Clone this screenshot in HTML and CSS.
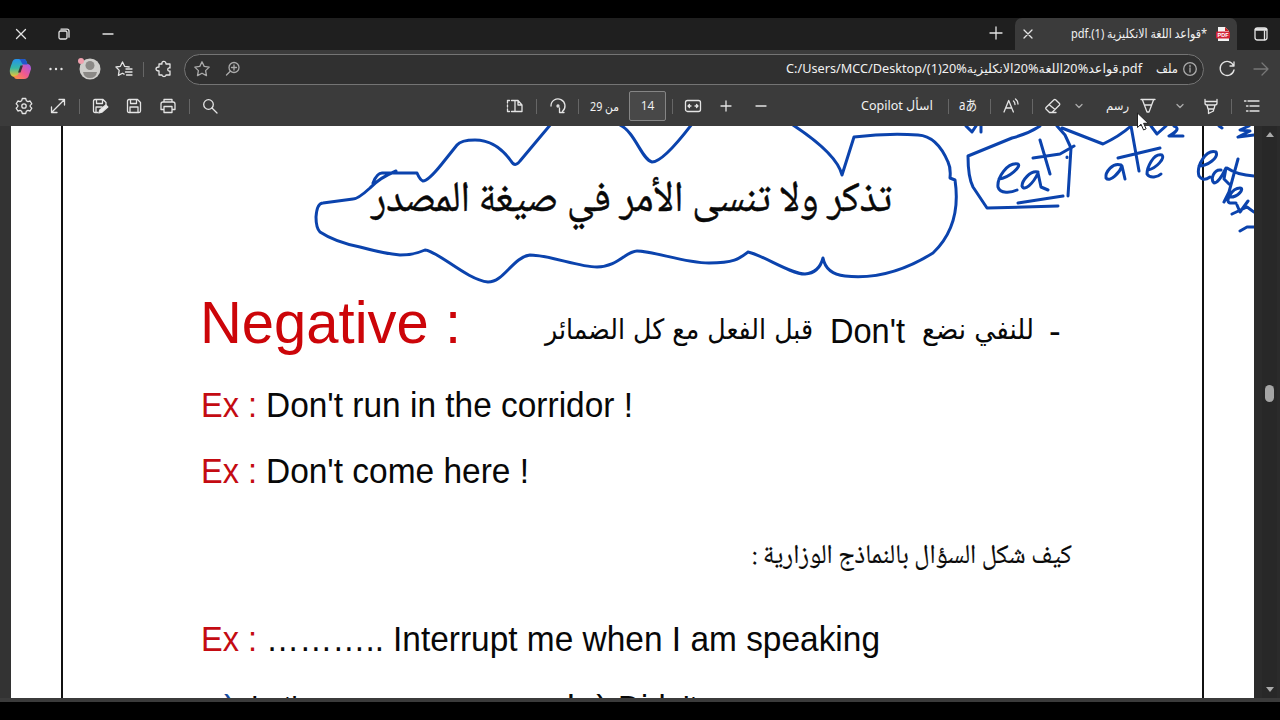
FILE: index.html
```html
<!DOCTYPE html>
<html lang="ar">
<head>
<meta charset="utf-8">
<title>قواعد اللغة الانكليزية (1).pdf</title>
<link rel="stylesheet" href="styles.css">
</head>
<body>
<div class="window">
  <header class="tabs">
    <span class="cell"><svg class="ic"><path d="M5.500 5.500l9 9m0-9l-9 9"/></svg></span>
    <span class="cell"><svg class="ic"><rect x="5" y="7" width="8" height="8" rx="1.500"/><path d="M7 5.200h6q2 0 2 2v6"/></svg></span>
    <span class="cell"><svg class="ic"><path d="M5 10h10"/></svg></span>
    <span></span>
    <span class="cell plus"><svg class="ic"><path d="M10 4v12M4 10h12"/></svg></span>
    <div class="tab">
      <svg class="ic"><path d="M6 6l8 8m0-8l-8 8"/></svg>
      <svg class="ui tab-title" width="136" height="24"><text class="rtl" x="136" y="16" textLength="136" lengthAdjust="spacingAndGlyphs">*قواعد اللغة الانكليزية (1).pdf</text></svg>
      <svg class="pdf" width="16" height="16"><path d="M3 1h7l4 4v10H3z" fill="#f4f4f4"/><path d="M10 1v4h4z" fill="#c22"/><rect x="1" y="5.500" width="14" height="7" rx="1" fill="#d32436"/><text x="2.500" y="11.200" textLength="11" lengthAdjust="spacingAndGlyphs">PDF</text></svg>
    </div>
    <span class="cell workspace"><svg class="ic"><rect x="4" y="4" width="12" height="12" rx="2.500"/><path d="M5 5.500h10" stroke-width="2.500"/><path d="M13.500 7v8.500"/></svg></span>
  </header>

  <nav class="address">
    <span class="cell"><svg width="24" height="24" viewBox="0 0 24 24">
      <defs><linearGradient id="ca" x1="0" y1="0" x2="0" y2="1"><stop offset="0" stop-color="#2492ed"/><stop offset=".5" stop-color="#36b8a5"/><stop offset="1" stop-color="#f6c72e"/></linearGradient>
      <linearGradient id="cb" x1="1" y1="0" x2="0" y2="1"><stop offset="0" stop-color="#9b5cf0"/><stop offset=".5" stop-color="#ef5892"/><stop offset="1" stop-color="#ff963c"/></linearGradient></defs>
      <path d="M8 2h8q2 0 3 4l1 2h-4q-2 0-3 3l-2 6q-1 3-4 3-4 0-5-4-1-3 2-10 1-4 4-4z" fill="url(#ca)"/>
      <path d="M16 7h3q4 0 4 5l-2 6q-1 4-5 4H9q-3 0-3-3 4 0 5-3l2-6q1-3 3-3z" fill="url(#cb)"/>
      <path d="M11 2h5q2 0 3 4l.5 1.500H16q-2 0-3-3-.5-2-2-2.500z" fill="#2257c9"/><path d="M12.500 8.500h2.500l-2.500 7h-2.500z" fill="#353535"/></svg></span>
    <span class="cell"><svg class="ic solid"><circle cx="4.500" cy="10" r="1.200"/><circle cx="10" cy="10" r="1.200"/><circle cx="15.500" cy="10" r="1.200"/></svg></span>
    <span class="cell"><svg width="26" height="26"><circle cx="14" cy="13" r="10.500" fill="#cfcecb"/><circle cx="14" cy="9.500" r="4.500" fill="#8b8986"/><path d="M7 16h14q-1 6-7 6t-7-6z" fill="#8b8986"/><circle cx="5" cy="5" r="3" fill="#f0a0ae"/></svg></span>
    <span class="cell"><svg class="ic"><path d="M8.500 3l2.100 4.300 4.600.7M8.500 3L6.400 7.300 2 8l3.200 3.400-.8 5 4.100-2.200 1.600.9M12 10h6M11.500 13h6.500M12.500 16H18"/></svg></span>
    <span class="sep"></span>
    <span class="cell"><svg class="ic"><path d="M5 5h3c-1-3 4-4 4 0h4v4c-3-1-3 4 0 3v4h-4c0 2-4 2-4 0H5v-4c-4 0-4-4 0-4z"/></svg></span>
    <div class="pill">
      <span class="cell"><svg class="ic dim"><path d="M10 2.800l2.200 4.600 5 .7-3.600 3.500.9 5-4.500-2.400-4.500 2.400.9-5L2.800 8.100l5-.7z"/></svg></span>
      <span class="cell"><svg class="ic dim"><circle cx="11" cy="8.500" r="5"/><path d="M7.300 12.200L3.500 16M8.500 8.500h5M11 6v5"/></svg></span>
      <span></span>
      <svg class="ui" width="356" height="24"><text x="0" y="16" textLength="356" lengthAdjust="spacingAndGlyphs">C:/Users/MCC/Desktop/(1)20%&lrm;الانكليزية&lrm;20%&lrm;اللغة&lrm;20%&lrm;قواعد&lrm;.pdf</text></svg>
      <svg class="ui file" width="22" height="24"><text class="rtl" x="22" y="16" textLength="22" lengthAdjust="spacingAndGlyphs">ملف</text></svg>
      <span class="cell"><svg class="ic dim"><circle cx="10" cy="10" r="6.300"/><path d="M10 9v4M10 6.500v1"/></svg></span>
    </div>
    <span class="cell"><svg class="ic"><path d="M16.500 6.500A7 7 0 1 0 17 11M17 3v4h-4"/></svg></span>
    <span class="cell"><svg class="ic faint"><path d="M3 10h14M11 4l6 6-6 6"/></svg></span>
  </nav>

  <div class="toolbar">
    <svg class="ic"><circle cx="10" cy="10" r="2.200"/><path d="M8.300 2.500h3.400l.6 2.200 1.600.9 2.200-.6 1.700 2.900-1.600 1.500v1.200l1.600 1.500-1.700 2.900-2.200-.6-1.600.9-.6 2.200H8.300l-.6-2.200-1.600-.9-2.200.6-1.700-2.900 1.600-1.500V9.400L2.200 7.900 3.900 5l2.200.6 1.600-.9z"/></svg>
    <svg class="ic"><path d="M4 16L16.500 3.500M11 3.500h5.500V9M3.500 11v5.500H9"/></svg>
    <span class="sep"></span>
    <svg class="ic"><path d="M8 16.500H5q-1.500 0-1.500-1.500V5q0-1.500 1.500-1.500h8l3 3V9M6.500 3.500v4h6v-4M6 16v-5h6"/><path d="M9 17l.8-3 6-5 2 2-6 5.200z" fill="#eee"/></svg>
    <svg class="ic"><path d="M5 3.500h8.500l3 3V15q0 1.500-1.500 1.500H5q-1.500 0-1.500-1.500V5q0-1.500 1.500-1.500zM6.500 3.500v4h6v-4M6 16.500v-5.500h8v5.500"/></svg>
    <svg class="ic"><path d="M6 13.500H3V8q0-2 2-2h10q2 0 2 2v5.500h-3M6 6V3.500h8V6M6 10.500h8v6H6z"/></svg>
    <span class="sep"></span>
    <svg class="ic"><circle cx="8.500" cy="8.500" r="4.800"/><path d="M12 12l5 5"/></svg>
    <span></span>
    <svg class="ic"><path d="M10 4.500H6.500M4.500 4.500h-2V7M2.500 9v2M2.500 13v2.500h2M6.500 15.500H10M10 4.500v11h7V9l-4-4.500zM13 4.500V9h4"/></svg>
    <span class="sep"></span>
    <svg class="ic"><path d="M3 10a7 7 0 1 1 11.500 5.300M11.500 12v4.500h4.500"/><circle cx="10" cy="10" r="1"/></svg>
    <span class="sep"></span>
    <svg class="ui" width="29" height="24"><text class="rtl" x="29" y="16.500" textLength="29" lengthAdjust="spacingAndGlyphs">من 29</text></svg>
    <span class="page-box">14</span>
    <span class="sep"></span>
    <svg class="ic"><rect x="2.500" y="4.500" width="15" height="11" rx="2"/><path d="M8 10H5.200M6.500 8.500L5 10l1.500 1.500M12 10h2.800M13.500 8.500L15 10l-1.500 1.500"/></svg>
    <svg class="ic"><path d="M10 5v10M5 10h10"/></svg>
    <svg class="ic"><path d="M5 10h10"/></svg>
    <span></span>
    <svg class="ui" width="72" height="24"><text class="rtl" x="72" y="16" textLength="72" lengthAdjust="spacingAndGlyphs">اسأل Copilot</text></svg>
    <span class="sep"></span>
    <svg class="ui cjk" width="18" height="20"><text x="0" y="14" textLength="18" lengthAdjust="spacingAndGlyphs">aあ</text></svg>
    <span class="sep"></span>
    <svg class="ic"><path d="M3 16L7.700 4.500 12.400 16M4.600 12h6.200M12.500 5q1.500 1.300 1.500 3.500M14.500 3q2.500 2 2.500 5"/></svg>
    <span class="sep"></span>
    <svg class="ic"><path d="M3 11.500L11 3.800q.8-.6 1.600 0L16.500 7.500q.6.800 0 1.500L9 16.500H6.500L3 13q-.6-.8 0-1.500zM6 8.500l6 5M8 16.500h5"/></svg>
    <svg class="ic dim"><path d="M7 8.500l3 3 3-3"/></svg>
    <svg class="ui" width="23" height="24"><text class="rtl" x="23" y="16" textLength="23" lengthAdjust="spacingAndGlyphs">رسم</text></svg>
    <svg class="ic"><path d="M3 3.500h14M4.500 4l4.500 12h2L15.500 4M6.500 9h7"/></svg>
    <svg class="ic dim"><path d="M7 8.500l3 3 3-3"/></svg>
    <svg class="ic"><path d="M4 3.500V7q0 2 2 2h8q2 0 2-2V3.500M4 5.500h12M6 9l1 4h6l1-4M7.500 13v4.500l5-2.500v-2"/></svg>
    <span class="sep"></span>
    <svg class="ic"><path d="M6 5h11M8 10h9M8 15h9M2.500 5H4M4.500 10H6M4.500 15H6"/></svg>
  </div>

  <main class="viewer">
    <article class="page">
      <div class="body">
        <svg class="line naskh h1" width="521" height="80"><text class="rtl" x="521" y="49" textLength="521" lengthAdjust="spacingAndGlyphs">تذكر ولا تنسى الأمر في صيغة المصدر</text></svg>
        <div class="row">
          <svg class="line red negative" width="261" height="70"><text x="-3" y="53" textLength="261" lengthAdjust="spacingAndGlyphs">Negative :</text></svg>
          <svg class="line rule-ar" width="268" height="70"><text class="rtl" x="268" y="49" textLength="268" lengthAdjust="spacingAndGlyphs">قبل الفعل مع كل الضمائر</text></svg>
          <svg class="line rule-en" width="75" height="70"><text x="-1" y="53" textLength="75" lengthAdjust="spacingAndGlyphs">Don't</text></svg>
          <svg class="line rule-ar2" width="112" height="70"><text class="rtl" x="112" y="49" textLength="112" lengthAdjust="spacingAndGlyphs">للنفي نضع</text></svg>
          <svg class="line dash" width="10" height="70"><text x="-1" y="53">-</text></svg>
        </div>
        <div class="row example">
          <svg class="line red" width="55" height="66"><text x="-2" y="48" textLength="56" lengthAdjust="spacingAndGlyphs">Ex :</text></svg>
          <svg class="line" width="366" height="66"><text x="-2" y="48" textLength="367" lengthAdjust="spacingAndGlyphs">Don't run in the corridor !</text></svg>
        </div>
        <div class="row example">
          <svg class="line red" width="55" height="66"><text x="-2" y="48" textLength="56" lengthAdjust="spacingAndGlyphs">Ex :</text></svg>
          <svg class="line" width="262" height="66"><text x="-2" y="48" textLength="263" lengthAdjust="spacingAndGlyphs">Don't come here !</text></svg>
        </div>
        <svg class="line naskh question" width="320" height="60"><text class="rtl" x="320" y="40" textLength="320" lengthAdjust="spacingAndGlyphs">كيف شكل السؤال بالنماذج الوزارية :</text></svg>
        <div class="row example gap-top">
          <svg class="line red" width="55" height="66"><text x="-2" y="48" textLength="56" lengthAdjust="spacingAndGlyphs">Ex :</text></svg>
          <svg class="line" width="613" height="66"><text x="-2" y="48" textLength="118" lengthAdjust="spacingAndGlyphs">………..</text><text x="125" y="48" textLength="487" lengthAdjust="spacingAndGlyphs">Interrupt me when I am speaking</text></svg>
        </div>
        <div class="row choices">
          <svg class="line" width="500" height="60"><text x="0" y="51">a</text><text class="blue" x="21" y="51">)</text><text x="48" y="51" textLength="61" lengthAdjust="spacingAndGlyphs">Let's</text><text x="364" y="51">b )</text><text x="415" y="51" textLength="80" lengthAdjust="spacingAndGlyphs">Didn't</text></svg>
        </div>
      </div>
      <svg class="ink" viewBox="11 126 1243 572" width="1243" height="572">
        <path d="M551 124L520 161Q515 168 511 161Q496 140 475 140Q461 140 457 145L441 165Q428 181 423 181Q420 180 417 173H382Q377 173 373 183M396 171Q379 178 370 188Q358 199 353 199L323 203Q317 203 316 217Q316 228 320 232Q335 242 360 247Q386 254 400 255Q414 255 425 250C438 251 467 280 488 282C504 282 513 257 530 255C550 255 578 267 597 267C618 267 626 251 637 251C654 251 684 263 709 263C734 263 739 259 748 252C763 255 790 274 805 274Q819 273 823 258Q826 274 845 276C880 280 909 268 933 253C958 229 958 200 955 180L950 178Q951 168 948 162Q937 136 918 135Q887 133 854 137L842 175Q837 154 793 125M620 125C635 132 642 160 652 162Q663 162 692 124"/>
        <path d="M1040 126Q1028 134 1012 138L968 156Q968 177 973 187L987 208L1058 206M1018 203L1063 196M1057 126L1065 135L1071 148L1068 196M1062 128L1103 144Q1120 136 1131 126L1139 171M1118 158L1160 148"/>
        <path d="M999 179C1009 178 1022 166 1018 164C1007 162 997 178 998 187C1000 194 1011 193 1017 190M1038 172C1030 170 1022 181 1022 186C1024 192 1033 184 1038 173L1041 187L1048 190M1040 140L1050 174M1033 158L1060 154L1074 146M1067 157v.5"/>
        <path d="M1121 165C1113 162 1105 172 1106 178C1110 183 1120 172 1122 166L1125 179M1148 170C1157 168 1165 158 1162 155C1153 153 1147 168 1147 174C1150 179 1158 177 1161 174"/>
        <path d="M966 126L972 132L976 126M981 126V132M1151 126L1157 134L1166 126M1174 126Q1182 129 1169 136L1183 136M1219 126L1222 128M1249 126L1240 130L1250 131L1238 137L1254 135"/>
        <path d="M1199 166C1207 166 1219 158 1216 152C1206 149 1196 166 1199 176Q1203 182 1210 177M1221 170C1214 169 1210 179 1214 183C1219 183 1225 170 1226 168L1224 179L1229 184M1238 159L1229 192L1224 202M1227 168Q1237 175 1254 176M1229 197C1238 198 1245 188 1240 188C1232 188 1224 202 1230 203L1236 203M1237 205L1240 212L1248 201M1232 214L1247 207L1254 212M1240 231L1247 227L1254 227"/>
      </svg>
    </article>
    <aside class="scroll"><i class="up"></i><i class="thumb"></i><i class="down"></i></aside>
  </main>
  <svg class="cursor" width="14" height="22"><path d="M1.500 1v14.500l3.500-3.300 2.600 5.800 2.500-1.200-2.500-5.500h4.600z"/></svg>
</div>
</body>
</html>
```
FILE: styles.css
```css
* { box-sizing: border-box; }
body { margin: 0; background: #000; width: 1280px; height: 720px; overflow: hidden; }
svg { display: block; flex: none; }
.window { position: relative; margin-top: 18px; height: 684px; background: #3b3b3b; }
.ic { width: 20px; height: 20px; fill: none; stroke: #e4e4e4; stroke-width: 1.3; stroke-linecap: round; stroke-linejoin: round; }
.ic.solid { fill: #e4e4e4; stroke: none; }
.ic.dim { stroke: #ababab; }
.ic.faint { stroke: #777; }
.cell { display: flex; align-items: center; justify-content: center; }
.plus { padding: 0 4px 2px 0; }
.workspace { padding-left: 4px; }
.sep { width: 1px; height: 15px; background: #666; justify-self: center; align-self: center; }
.ui { overflow: visible; }
.ui text { fill: #f2f2f2; font: 12.5px "Noto Sans", "Open Sans", "DejaVu Sans", sans-serif; }
.ui.cjk text { font: 14px "Noto Sans", "Noto Sans CJK JP", sans-serif; }
.rtl { direction: rtl; }

.tabs { display: grid; grid-template-columns: 42px 44px 44px 851px 34px 222px 43px; height: 32px; background: #1f1f1f; }
.tab { display: flex; align-items: center; padding: 0 5px 0 3px; background: #3b3b3b; border-radius: 7px 7px 0 0; }
.tab-title { margin: 0 8px 0 33px; }
.pdf text { font: bold 5px "Liberation Sans", sans-serif; fill: #fff; }

.address { display: grid; grid-template-columns: 40px 32px 34px 36px 2px 40px 1020px 46px 22px; height: 38px; align-items: center; }
.pill { display: grid; grid-template-columns: 34px 28px 539px 356px 14px 22px 24px; align-items: center; height: 31px; border: 1px solid #747474; border-radius: 16px; background: #303030; }
.file { grid-column: 6; }

.toolbar { display: grid; grid-template-columns: 48px 20px 22px 20px 48px 20px 22px 20px 281px 28px 14px 30px 10px 43px 43px 6px 36px 30px 40px 76px 80px 22px 18px 26px 16px 26px 16px 36px 41px 20px 44px 18px 22px 20px; height: 38px; padding-bottom: 2px; align-items: center; justify-items: center; }
.page-box { width: 37px; height: 30px; border: 1px solid #858585; border-radius: 2px; background: #484848; color: #f4f4f4; font: 12px/28px "Open Sans", "Noto Sans", sans-serif; text-align: center; }

.viewer { display: flex; height: 572px; padding-left: 11px; background: #2b2b2b; }
.page { position: relative; width: 1243px; height: 572px; overflow: hidden; background: #fff; box-shadow: -11px 0 0 #333; }
.body { width: 1143px; height: 572px; margin-left: 50px; padding-left: 140px; border: solid #111; border-width: 0 2px; overflow: hidden; }
.line { overflow: visible; }
.line text { font: 35px "Liberation Sans", Arial, sans-serif; fill: #080808; }
.line.red text { fill: #c40b12; }
.line text.blue { fill: #164a9c; }
.line text.rtl { font: 28px "DejaVu Sans", sans-serif; }
.line.naskh text.rtl { font-family: "Noto Naskh Arabic", Amiri, "Noto Sans Arabic", serif; }
.line.h1 text.rtl { font-size: 43px; stroke: #080808; stroke-width: .5; }
.h1 { margin: 36px 0 0 168px; }
.row { display: flex; }
.row:nth-child(2) { margin-top: 48px; }
.row .negative text { font-size: 60px; fill: #cc0509; }
.rule-ar { margin-left: 81px; }
.rule-en { margin-left: 18px; }
.rule-ar2 { margin-left: 16px; }
.dash { margin-left: 16px; }
.example { gap: 10px; margin-top: 9px; }
.example + .example { margin-top: 0; }
.question { margin: 22px 0 0 549px; }
.line.question text.rtl { font-size: 27px; stroke: #080808; stroke-width: .2; }
.example.gap-top { margin-top: 20px; }
.ink { position: absolute; left: 0; top: 0; fill: none; stroke: #0b43ad; stroke-width: 3; stroke-linecap: round; stroke-linejoin: round; }

.scroll { display: flex; flex-direction: column; align-items: center; width: 15px; margin-left: 8px; padding: 6px 0; background: #282828; }
.up { border: 4px solid transparent; border-top: 0; border-bottom: 5px solid #aaa; }
.thumb { width: 9px; height: 17px; margin-top: 248px; border-radius: 5px; background: #a5a5a5; }
.down { margin-top: auto; border: 4px solid transparent; border-bottom: 0; border-top: 5px solid #aaa; }
.cursor { position: absolute; left: 1136px; top: 94px; fill: #fff; stroke: #222; stroke-width: 1; }
```
